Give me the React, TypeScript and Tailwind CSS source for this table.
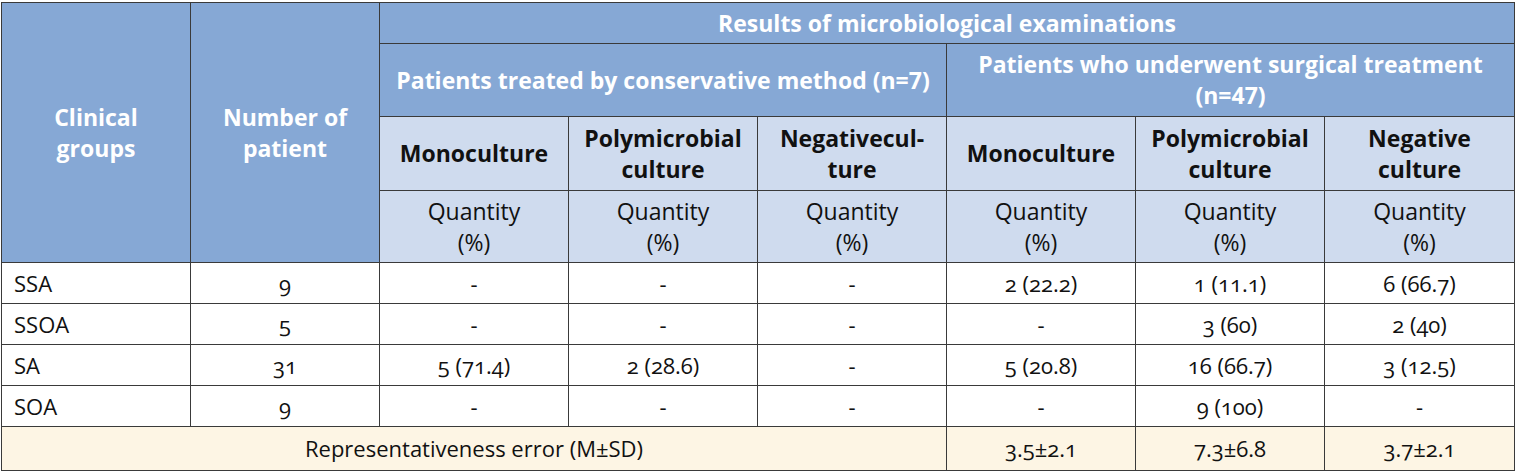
import React from 'react';

const head = 'bg-[#86a8d5] text-white font-bold border border-[#3a3a3a] text-center align-middle';
const sub = 'bg-[#cfdbee] text-[#111] border border-[#3a3a3a] text-center align-middle';
const cell = 'border border-[#3a3a3a] text-center align-middle';

const rows = [
  ['SSA', '9', '-', '-', '-', '2 (22.2)', '1 (11.1)', '6 (66.7)'],
  ['SSOA', '5', '-', '-', '-', '-', '3 (60)', '2 (40)'],
  ['SA', '31', '5 (71.4)', '2 (28.6)', '-', '5 (20.8)', '16 (66.7)', '3 (12.5)'],
  ['SOA', '9', '-', '-', '-', '-', '9 (100)', '-'],
];

export default function App() {
  return (
    <div className="w-[1515px] h-[472px] bg-white pt-[2px] pl-px font-['Open_Sans',sans-serif]">
      <table className="border-collapse table-fixed w-[1513px] text-[23px] leading-[31px]">
        <colgroup>
          <col className="w-[189px]" />
          <col className="w-[189px]" />
          <col className="w-[189px]" />
          <col className="w-[189px]" />
          <col className="w-[189px]" />
          <col className="w-[189px]" />
          <col className="w-[189px]" />
          <col className="w-[190px]" />
        </colgroup>
        <thead>
          <tr className="h-[41px]">
            <th rowSpan={4} className={head}>
              Clinical
              <br />
              groups
            </th>
            <th rowSpan={4} className={head}>
              Number of
              <br />
              patient
            </th>
            <th colSpan={6} className={head}>
              Results of microbiological examinations
            </th>
          </tr>
          <tr className="h-[73px]">
            <th colSpan={3} className={head}>
              Patients treated by conservative method (n=7)
            </th>
            <th colSpan={3} className={head}>
              Patients who underwent surgical treatment
              <br />
              (n=47)
            </th>
          </tr>
          <tr className="h-[74px]">
            <th className={`${sub} font-bold`}>Monoculture</th>
            <th className={`${sub} font-bold`}>
              Polymicrobial
              <br />
              culture
            </th>
            <th className={`${sub} font-bold`}>
              Negativecul-
              <br />
              ture
            </th>
            <th className={`${sub} font-bold`}>Monoculture</th>
            <th className={`${sub} font-bold`}>
              Polymicrobial
              <br />
              culture
            </th>
            <th className={`${sub} font-bold`}>
              Negative
              <br />
              culture
            </th>
          </tr>
          <tr className="h-[72px]">
            {Array.from({ length: 6 }).map((_, i) => (
              <th key={i} className={`${sub} font-normal`}>
                Quantity
                <br />
                (%)
              </th>
            ))}
          </tr>
        </thead>
        <tbody className="text-[22px] text-[#111] oldstyle-nums">
          {rows.map((r) => (
            <tr key={r[0]} className="h-[41px]">
              {r.map((v, i) => (
                <td key={i} className={i === 0 ? `${cell} text-left pl-3` : cell}>
                  {v}
                </td>
              ))}
            </tr>
          ))}
          <tr className="h-[44px] bg-[#fdf5e4]">
            <td colSpan={5} className={cell}>
              Representativeness error (M±SD)
            </td>
            <td className={cell}>3.5±2.1</td>
            <td className={cell}>7.3±6.8</td>
            <td className={cell}>3.7±2.1</td>
          </tr>
        </tbody>
      </table>
    </div>
  );
}
